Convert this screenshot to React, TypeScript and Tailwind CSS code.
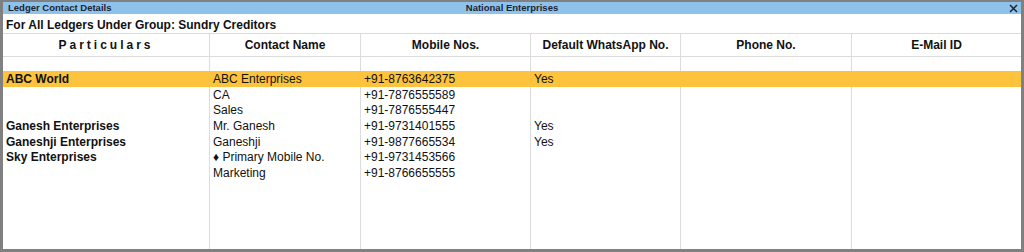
import React from "react";

type Row = {
  ledger?: string;
  contact: string;
  mobile: string;
  whatsapp?: string;
  active?: boolean;
};

const rows: Row[] = [
  { ledger: "ABC World", contact: "ABC Enterprises", mobile: "+91-8763642375", whatsapp: "Yes", active: true },
  { contact: "CA", mobile: "+91-7876555589" },
  { contact: "Sales", mobile: "+91-7876555447" },
  { ledger: "Ganesh Enterprises", contact: "Mr. Ganesh", mobile: "+91-9731401555", whatsapp: "Yes" },
  { ledger: "Ganeshji Enterprises", contact: "Ganeshji", mobile: "+91-9877665534", whatsapp: "Yes" },
  { ledger: "Sky Enterprises", contact: "\u2666 Primary Mobile No.", mobile: "+91-9731453566" },
  { contact: "Marketing", mobile: "+91-8766655555" },
];

const cols = "grid grid-cols-[207px_151px_170px_150px_171px_1fr]";

const App: React.FC = () => {
  return (
    <div className="h-[252px] w-[1024px] overflow-hidden bg-[#808080] pt-[2px] pr-[3px] pb-[3px] pl-[3px] font-['Liberation_Sans',Arial,sans-serif] text-[#111]">
      <div className="flex h-full flex-col bg-white">
        {/* title bar */}
        <div className="relative flex h-[12px] items-center bg-[#8fc2ea] text-[9.5px] font-bold leading-none text-[#1b2433]">
          <span className="pl-[5px]">Ledger Contact Details</span>
          <span className="absolute left-1/2 -translate-x-1/2">National Enterprises</span>
          <span className="absolute right-[3px] top-[2px]">
            <svg width="9" height="9" viewBox="0 0 9 9">
              <path d="M1 1 L8 8 M8 1 L1 8" stroke="#1b2433" strokeWidth="1.5" />
            </svg>
          </span>
        </div>

        <div className="h-[19px] pl-[3px] pt-[4px] text-[12px] font-bold leading-[15px]">
          For All Ledgers Under Group: Sundry Creditors
        </div>

        {/* column headers */}
        <div className={`${cols} h-[24px] border-y border-[#dcdcdc] text-[12px] font-bold`}>
          <div className="flex items-center justify-center border-r border-[#dcdcdc] tracking-[3px]">Particulars</div>
          <div className="flex items-center justify-center border-r border-[#dcdcdc]">Contact Name</div>
          <div className="flex items-center justify-center border-r border-[#dcdcdc]">Mobile Nos.</div>
          <div className="flex items-center justify-center border-r border-[#dcdcdc]">Default WhatsApp No.</div>
          <div className="flex items-center justify-center border-r border-[#dcdcdc]">Phone No.</div>
          <div className="flex items-center justify-center">E-Mail ID</div>
        </div>

        {/* spacer row */}
        <div className={`${cols} h-[14px]`}>
          <div className="border-r border-[#dcdcdc]" />
          <div className="border-r border-[#dcdcdc]" />
          <div className="border-r border-[#dcdcdc]" />
          <div className="border-r border-[#dcdcdc]" />
          <div className="border-r border-[#dcdcdc]" />
          <div />
        </div>

        {rows.map((r, i) => (
          <div
            key={i}
            className={`${cols} h-[15.67px] text-[12px] leading-[14.67px] ${r.active ? "bg-[#fdc33c]" : ""}`}
          >
            <div className={`truncate border-r pl-[3px] pt-[1px] font-bold ${r.active ? "border-transparent" : "border-[#dcdcdc]"}`}>
              {r.ledger}
            </div>
            <div className={`truncate border-r pl-[3px] pt-[1px] ${r.active ? "border-transparent" : "border-[#dcdcdc]"}`}>
              {r.contact}
            </div>
            <div className={`truncate border-r pl-[3px] pt-[1px] ${r.active ? "border-transparent" : "border-[#dcdcdc]"}`}>
              {r.mobile}
            </div>
            <div className={`truncate border-r pl-[3px] pt-[1px] ${r.active ? "border-transparent" : "border-[#dcdcdc]"}`}>
              {r.whatsapp}
            </div>
            <div className={`border-r ${r.active ? "border-transparent" : "border-[#dcdcdc]"}`} />
            <div />
          </div>
        ))}

        {/* filler */}
        <div className={`${cols} flex-1`}>
          <div className="border-r border-[#dcdcdc]" />
          <div className="border-r border-[#dcdcdc]" />
          <div className="border-r border-[#dcdcdc]" />
          <div className="border-r border-[#dcdcdc]" />
          <div className="border-r border-[#dcdcdc]" />
          <div />
        </div>
      </div>
    </div>
  );
};

export default App;
